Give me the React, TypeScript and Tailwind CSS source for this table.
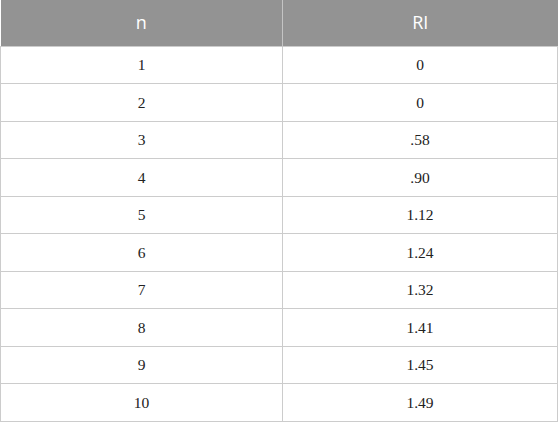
const rows: [string, string][] = [
  ['1', '0'],
  ['2', '0'],
  ['3', '.58'],
  ['4', '.90'],
  ['5', '1.12'],
  ['6', '1.24'],
  ['7', '1.32'],
  ['8', '1.41'],
  ['9', '1.45'],
  ['10', '1.49'],
];

export default function App() {
  return (
    <div className="w-[558px] h-[422px] bg-white">
      <table className="w-full border-collapse table-fixed">
        <thead>
          <tr className="h-[46px] bg-[#939393] text-white font-['Open_Sans',sans-serif] text-[18px]">
            <th className="w-[282px] font-normal border-r border-[#c4c4c4]">n</th>
            <th className="font-normal">RI</th>
          </tr>
        </thead>
        <tbody className="font-['Liberation_Serif',serif] text-[15.5px] text-[#222]">
          {rows.map(([n, ri]) => (
            <tr key={n} className="h-[37.5px]">
              <td className="text-center border border-[#cccccc]">{n}</td>
              <td className="text-center border border-[#cccccc]">{ri}</td>
            </tr>
          ))}
        </tbody>
      </table>
    </div>
  );
}
